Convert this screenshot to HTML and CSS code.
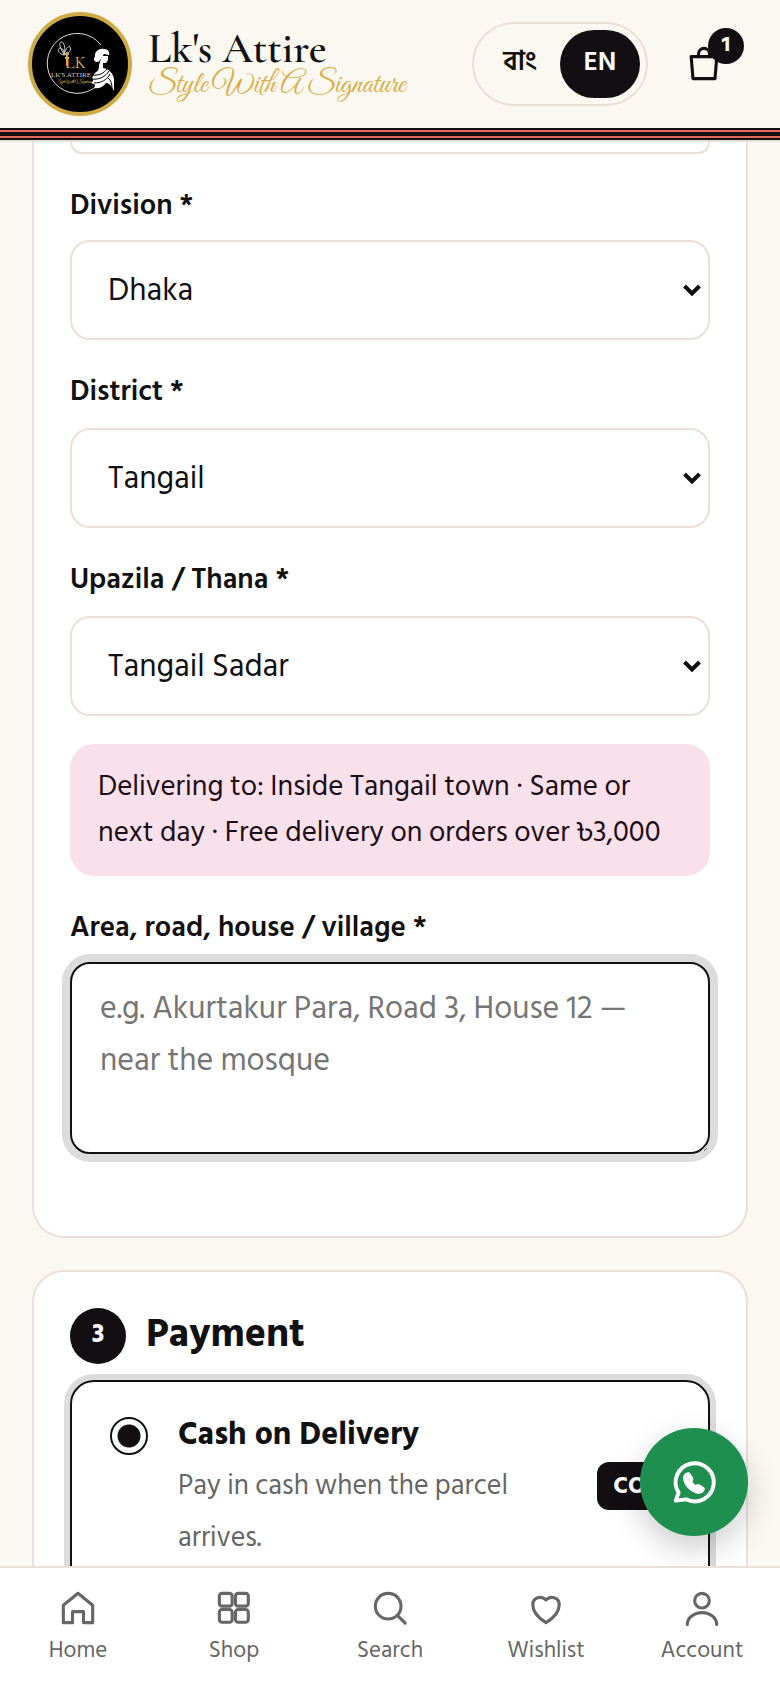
FILE: index.html
```html
<!DOCTYPE html>
<html lang="en">
<head>
    <meta charset="UTF-8">
    <meta name="viewport" content="width=device-width, initial-scale=1.0">
    <title>Checkout - Lk's Attire</title>
    <link rel="stylesheet" href="styles.css">
</head>
<body>
    <header class="header">
        <a class="brand" href="#">
            <svg class="logo" viewBox="0 0 104 104" aria-hidden="true">
                <circle cx="52" cy="52" r="50" fill="#000" stroke="#d0aa45" stroke-width="4"/>
                <path d="M73 33A30 30 0 1 0 70 73" fill="none" stroke="#ddd" stroke-width="1"/>
                <!-- butterfly -->
                <path d="M36 43c-6-1-7-6-4-7 3 0 4 3 4 7zm0 0c-3-6-6-12-3-13s5 7 3 13zm0 0c1-5 4-10 6-8s-1 7-6 8z" fill="none" stroke="#ccc"/>
                <path d="M39 40v14M37 42h4M37 46h4" stroke="#c9a646" stroke-width="2"/>
                <text x="37" y="56" class="logo-letter">LK</text>
                <text x="23" y="65" class="logo-name">LK'S ATTIRE</text>
                <text x="29" y="71" class="logo-tag">Style With A Signature</text>
                <!-- woman in saree -->
                <circle cx="69" cy="47" r="3" fill="#fff"/>
                <path d="M67 45c-1-6 5-9 9-8 4 0 6 3 5 6l-5-1-4 6z" fill="#fff"/>
                <path d="M74 44l6 0 0 4-2 3-3 0 0 5c6 1 10 5 11 11v12c-3-6-5-8-8-8-3 4-7 6-12 5 2-3 1-4-3-5 2-1 3-3 1-5l3-5c3-2 4-3 4-8z" fill="#fff"/>
                <path d="M64 63c7 1 12-2 15-6M64 67c8 1 14-3 17-8M66 71c7 0 13-3 16-9M80 66c3 2 4 6 4 11" fill="none" stroke="#000"/>
            </svg>
            <span class="brand-text">
                <span class="brand-name">Lk's Attire</span>
                <span class="brand-tag">Style With A Signature</span>
            </span>
        </a>
        <div class="lang">
            <button class="lang-btn" type="button" lang="bn">বাং</button>
            <button class="lang-btn active" type="button">EN</button>
        </div>
        <button class="cart" type="button" aria-label="Cart">
            <svg class="icon" viewBox="0 0 24 24"><path d="M5 8h14l-1 12H6L5 8z"/><path d="M9 8V6.500a3 3 0 0 1 6 0V8"/></svg>
            <span class="badge">1</span>
        </button>
    </header>
    <div class="stripes"></div>

    <main class="main">
        <section class="card card-address">
            <input class="control control-cut" type="text" aria-label="Phone">

            <label class="label label-first" for="division">Division *</label>
            <div class="select">
                <select class="control" id="division"><option>Dhaka</option></select>
                <svg class="chevron" viewBox="0 0 18 12"><path d="M1.500 2 9 9.500 16.500 2"/></svg>
            </div>

            <label class="label" for="district">District *</label>
            <div class="select">
                <select class="control" id="district"><option>Tangail</option></select>
                <svg class="chevron" viewBox="0 0 18 12"><path d="M1.500 2 9 9.500 16.500 2"/></svg>
            </div>

            <label class="label" for="upazila">Upazila / Thana *</label>
            <div class="select">
                <select class="control" id="upazila"><option>Tangail Sadar</option></select>
                <svg class="chevron" viewBox="0 0 18 12"><path d="M1.500 2 9 9.500 16.500 2"/></svg>
            </div>

            <p class="notice">Delivering to: Inside Tangail town · Same or next day · Free delivery on orders over ৳3,000</p>

            <label class="label label-area" for="area">Area, road, house / village *</label>
            <textarea class="control area" id="area" placeholder="e.g. Akurtakur Para, Road 3, House 12 — near the mosque"></textarea>
        </section>

        <section class="card">
            <h2 class="title"><span class="step">3</span>Payment</h2>
            <label class="option">
                <input class="radio" type="radio" name="payment" checked>
                <span class="option-text">
                    <strong class="option-name">Cash on Delivery</strong>
                    <span class="option-info">Pay in cash when the parcel arrives.</span>
                </span>
                <span class="tag">COD</span>
            </label>
        </section>
    </main>

    <a class="whatsapp" href="#" aria-label="WhatsApp">
        <svg viewBox="0 0 24 24"><path d="M3.600 20.600l1.300-3.700A8.800 8.800 0 1 1 8.300 20z"/><path class="phone" d="M9.400 8.600l1.200 2-.5 1.400c.6 1.200 1.400 2 2.600 2.600l1.200-.6 2 1.200c-.5 1-1.600 1.300-2.800.9-2.500-.8-4.500-3-5-5.300-.2-1 .3-1.900 1.300-2.200z"/></svg>
    </a>

    <nav class="nav">
        <a class="nav-link" href="#"><svg class="icon" viewBox="0 0 24 24"><path d="M4 10.500 12 4l8 6.500V20h-5v-6H9v6H4z"/></svg>Home</a>
        <a class="nav-link" href="#"><svg class="icon" viewBox="0 0 24 24"><rect x="4" y="4" width="7" height="7" rx="1.500"/><rect x="12.800" y="4" width="7" height="7" rx="1.500"/><rect x="4" y="12.800" width="7" height="7" rx="1.500"/><rect x="12.800" y="12.800" width="7" height="7" rx="1.500"/></svg>Shop</a>
        <a class="nav-link" href="#"><svg class="icon" viewBox="0 0 24 24"><circle cx="11" cy="11" r="7"/><path d="M16 16l4.300 4.300"/></svg>Search</a>
        <a class="nav-link" href="#"><svg class="icon" viewBox="0 0 24 24"><path d="M12 20C8 17.500 4.800 14 4.800 10.200 4.800 6.200 9.500 5 12 7.600c2.500-2.600 7.200-1.400 7.200 2.600C19.200 14 16 17.500 12 20z"/></svg>Wishlist</a>
        <a class="nav-link" href="#"><svg class="icon" viewBox="0 0 24 24"><circle cx="12" cy="8" r="4"/><path d="M4 21a8 6.500 0 0 1 16 0"/></svg>Account</a>
    </nav>
</body>
</html>
```
FILE: styles.css
```css
* {
    box-sizing: border-box;
}

body {
    margin: 0;
    height: 100vh;
    display: flex;
    flex-direction: column;
    overflow: hidden;
    background-color: #fbf8f1;
    color: #111;
    font-family: "Hind Siliguri", "Noto Sans", "Noto Sans Bengali", sans-serif;
    font-size: 29px;
}

button, input, select, textarea {
    font-family: inherit;
    color: inherit;
}

.header {
    display: flex;
    align-items: center;
    height: 128px;
    padding: 0 32px 0 28px;
    flex-shrink: 0;
}

.brand {
    display: flex;
    align-items: center;
    gap: 16px;
    margin-right: auto;
    color: inherit;
    text-decoration: none;
}

.logo {
    width: 104px;
    height: 104px;
}

.logo-letter {
    font: 18px "Cormorant Garamond", "Liberation Serif", serif;
    fill: #e2bd50;
}

.logo-name {
    font: 7px "Liberation Serif", serif;
    fill: #ccc;
}

.logo-tag {
    font: 4px "Great Vibes", "Liberation Serif", serif;
    fill: #f0dc70;
}

.brand-text {
    display: flex;
    flex-direction: column;
}

.brand-name {
    font-family: "Cormorant Garamond", "Liberation Serif", serif;
    font-size: 43px;
    font-weight: 600;
    line-height: 42px;
}

.brand-tag {
    font-family: "Great Vibes", "Liberation Serif", serif;
    font-size: 30px;
    line-height: 32px;
    color: #d9ae45;
}

.lang {
    display: flex;
    padding: 6px;
    border: 2px solid #e8e0d6;
    border-radius: 42px;
}

.lang-btn {
    width: 80px;
    height: 68px;
    padding: 0 0 4px;
    border: none;
    border-radius: 34px;
    background: none;
    font-size: 27px;
    font-weight: 600;
}

.lang-btn.active {
    background-color: #120e12;
    color: #fff;
}

.cart {
    position: relative;
    display: flex;
    align-items: center;
    justify-content: center;
    width: 88px;
    height: 88px;
    margin-left: 12px;
    padding: 0;
    border: none;
    background: none;
}

.icon {
    width: 44px;
    height: 44px;
    fill: none;
    stroke: currentColor;
    stroke-width: 1.7;
    stroke-linejoin: round;
    stroke-linecap: round;
}

.badge {
    position: absolute;
    top: 8px;
    right: 4px;
    width: 36px;
    height: 36px;
    border-radius: 50%;
    background-color: #120e12;
    color: #fff;
    font-size: 22px;
    font-weight: 700;
    line-height: 32px;
}

.stripes {
    height: 14px;
    flex-shrink: 0;
    background: linear-gradient(#120e12 2px, #e2685c 2px 4px, #120e12 4px 8px, #e2685c 8px 10px, #120e12 10px 12px, #e8ded8 12px);
}

.main {
    flex: 1;
    min-height: 0;
    overflow: hidden;
    padding: 0 32px;
}

.card {
    display: flex;
    flex-direction: column;
    padding: 36px;
    border: 2px solid #eae0d8;
    border-radius: 32px;
    background-color: #fff;
}

.card-address {
    margin-bottom: 32px;
    padding-top: 0;
    padding-bottom: 82px;
    border-top: none;
    border-radius: 0 0 32px 32px;
}

.label {
    margin: 30px 0 14px;
    font-weight: 600;
    line-height: 44px;
}

.label-first, .label-area {
    margin-bottom: 12px;
}

.select {
    position: relative;
}

.control {
    width: 100%;
    height: 100px;
    padding: 0 36px;
    border: 2px solid #eae0d8;
    border-radius: 20px;
    background-color: #fff;
    font-size: 32px;
    appearance: none;
}

.control-cut {
    height: 12px;
    border-top: none;
    border-radius: 0 0 20px 20px;
}

.chevron {
    position: absolute;
    right: 9px;
    top: 44px;
    width: 18px;
    height: 12px;
    fill: none;
    stroke: #111;
    stroke-width: 4;
}

.notice {
    margin: 28px 0 0;
    padding: 20px 28px;
    border-radius: 24px;
    background-color: #f8e1eb;
    color: #1c0c16;
    line-height: 46px;
}

.area {
    height: 192px;
    padding: 18px 28px;
    border-color: #111;
    box-shadow: 0 0 0 8px #dcdcdc;
    line-height: 52px;
}

.area::placeholder {
    color: #757575;
}

.title {
    display: flex;
    align-items: flex-start;
    gap: 20px;
    margin: 0;
    font-size: 40px;
    line-height: 52px;
}

.step {
    width: 56px;
    height: 56px;
    border-radius: 50%;
    background-color: #120e12;
    color: #fff;
    font-size: 26px;
    text-align: center;
}

.option {
    display: flex;
    gap: 30px;
    margin-top: 16px;
    padding: 26px 30px 26px 38px;
    border: 2px solid #111;
    border-radius: 24px;
    box-shadow: 0 0 0 6px #dcdcdc;
}

.radio {
    appearance: none;
    width: 38px;
    height: 38px;
    margin: 9px 0 0;
    border: 2px solid #111;
    border-radius: 50%;
    background: radial-gradient(circle, #120e12 11px, #fff 12px);
    flex-shrink: 0;
}

.option-text {
    flex: 1;
    line-height: 52px;
}

.option-name, .option-info {
    display: block;
}

.option-name {
    font-size: 32px;
}

.option-info {
    color: #666;
    font-size: 28px;
}

.tag {
    align-self: center;
    padding: 0 16px;
    border-radius: 12px;
    background-color: #120e12;
    color: #fff;
    font-size: 24px;
    font-weight: 700;
    line-height: 48px;
}

.whatsapp {
    position: fixed;
    right: 32px;
    bottom: 152px;
    display: flex;
    align-items: center;
    justify-content: center;
    width: 108px;
    height: 108px;
    border-radius: 50%;
    background-color: #1f8f50;
    box-shadow: 0 12px 32px rgba(0, 0, 0, 0.2);
}

.whatsapp svg {
    width: 52px;
    height: 52px;
    fill: none;
    stroke: #fff;
    stroke-width: 1.8;
    stroke-linejoin: round;
}

.whatsapp .phone {
    stroke-width: 2.2;
}

.nav {
    position: relative;
    display: flex;
    flex-shrink: 0;
    height: 122px;
    padding-top: 18px;
    border-top: 2px solid #eae0d8;
    background-color: #fff;
}

.nav-link {
    flex: 1;
    display: flex;
    flex-direction: column;
    align-items: center;
    gap: 2px;
    color: #666;
    font-size: 23px;
    line-height: 36px;
    text-decoration: none;
}
```
